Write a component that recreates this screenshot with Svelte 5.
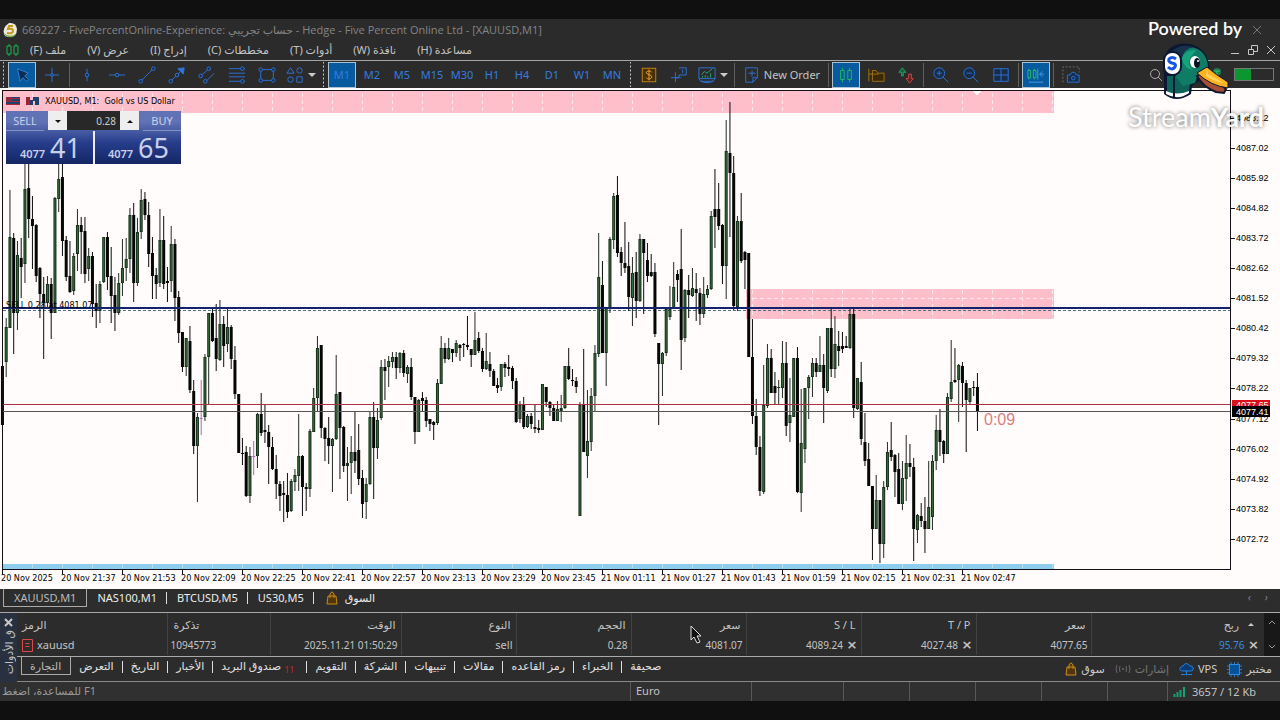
<script>
  // One candle per entry: direction (u up, d down, m flat), high, body top, body bottom, low.
  const series = `d366,366,425,425 u318,327,362,377 u190,237,328,328 d233,238,313,354 u241,255,313,330 d238,258,267,298 u164,189,264,283 d164,188,219,238
d196,219,226,269 d224,225,276,282 d267,268,294,318 d277,294,303,359 u276,284,303,307 d278,284,313,339 u197,198,313,313 u164,179,199,212
d164,177,241,256 d236,240,277,281 d241,276,292,293 u253,256,291,295 u209,225,254,271 d217,225,232,274 d217,231,274,283 u248,256,269,281
d252,256,304,317 d284,303,311,328 u281,284,311,323 u237,237,282,283 d232,237,277,290 d247,276,296,323 d277,295,313,331 u273,283,313,315
u239,268,283,296 u238,259,268,281 u208,215,259,273 d203,215,283,302 u218,232,283,286 u189,200,232,239 d192,199,215,220 d202,215,254,267
d237,253,276,299 d268,275,284,299 u209,240,283,287 d216,240,284,289 d267,281,283,302 u226,244,281,292 d239,244,298,321 d291,297,333,343
d332,332,367,372 u338,338,367,376 d326,341,390,393 d380,391,446,454 u413,417,446,502 m380,418,419,435 u354,357,417,421 u313,313,357,404
d307,313,341,342 d304,338,359,371 u300,324,360,361 d316,324,346,367 u307,327,344,352 d325,327,359,369 d346,360,394,399 d394,394,453,453
d438,453,454,465 d446,452,496,497 u447,456,496,503 m441,456,457,475 u413,414,456,468 d393,414,433,436 d404,430,432,443 d425,432,447,484
d437,447,469,470 d455,469,484,499 d481,484,496,511 d481,493,495,522 d473,495,512,518 u479,481,511,512 u469,475,482,491 u414,456,476,491
d455,456,487,516 d483,487,489,511 u429,431,489,497 u388,398,432,432 u336,348,398,411 d345,345,428,438 d427,428,439,461 d417,438,446,464
u438,439,446,492 u355,394,439,440 d392,392,428,479 d426,427,466,472 u447,463,466,501 u436,452,463,494 d412,452,461,473 d424,450,479,485
d470,478,504,518 u478,484,502,519 u412,417,484,485 d402,417,448,499 u408,420,448,459 u360,367,418,420 d359,367,371,400 u356,361,367,387
u352,357,362,368 d352,357,368,379 u352,353,368,373 d350,353,373,377 u365,367,374,383 d358,367,397,400 d397,397,432,444 u399,400,432,432
d392,398,401,411 d397,400,421,427 d419,419,424,431 d421,422,425,440 u379,383,423,425 u336,348,384,384 d343,348,359,363 u338,348,359,360
d349,349,353,362 u340,343,353,357 d344,345,348,361 d343,344,345,357 d316,345,347,350 d349,349,355,367 u312,340,355,355 d332,338,351,353
d348,351,369,372 u333,361,369,370 d352,364,371,377 d369,371,386,386 d378,385,388,393 u364,364,387,391 d362,364,368,377 d355,367,369,376
d366,368,381,389 d378,381,422,423 u401,405,419,423 d397,405,427,429 u414,416,427,428 d413,416,424,429 d405,427,429,433 d420,428,430,433
u384,384,430,430 d387,387,402,407 d401,402,408,416 d404,408,421,421 u401,409,421,421 u395,408,411,422 u366,366,408,409 d348,366,379,380
d369,380,381,386 d377,381,387,393 u402,405,516,516 d349,405,452,452 u390,441,456,478 u388,396,442,451 u345,353,396,411 u233,277,354,357
d261,285,353,353 u307,307,353,386 u237,239,308,313 u193,196,240,249 d176,195,253,257 d247,252,263,276 d222,263,268,273 d242,266,297,311
u257,273,298,326 d252,272,301,318 u234,239,301,302 d239,239,253,314 d243,260,276,282 d254,272,276,277 d263,272,334,337 d343,343,364,425
u352,353,364,396 u308,309,353,356 u286,309,317,320 u262,287,309,309 d270,274,280,302 d229,269,340,370 u289,290,338,342 d275,290,295,318
u268,288,296,297 d273,289,293,321 d288,293,314,325 u277,294,314,318 u285,289,295,298 u211,216,289,290 d169,209,217,248 d183,209,226,230
d224,225,266,284 u120,151,266,299 d102,153,173,237 d156,173,306,310 u216,221,307,311 d193,221,261,263 d251,252,260,289 d253,253,357,357
d319,357,416,424 d399,416,447,455 d436,447,491,496 u365,405,492,494 u344,358,406,408 d349,358,393,393 d372,386,393,404 u380,387,388,404
u341,363,388,398 d342,363,426,436 u378,415,423,442 u358,358,417,417 d347,358,492,493 u389,443,493,512 u388,388,449,463 u375,377,388,419
u358,363,377,397 d358,363,372,377 u336,365,372,372 d354,365,388,423 u328,328,391,393 d307,328,369,377 u316,344,369,378 d331,346,351,366
d332,346,349,353 d336,346,348,348 u308,314,348,349 d308,314,408,418 u378,378,409,410 d362,382,439,445 d413,442,461,466 d443,459,486,486
d486,486,529,560 u475,500,529,529 d500,500,544,563 u481,487,544,558 u442,452,487,490 d422,450,457,461 d454,455,472,497 d453,469,504,504
u461,478,504,510 u435,463,479,501 d444,463,467,477 d458,467,529,561 u514,515,530,543 d503,516,521,527 d497,521,529,553 u461,507,529,529
u455,461,517,530 u415,430,461,470 d409,430,442,456 d440,441,454,463 u393,397,454,454 u340,382,399,402 d348,380,382,383 u364,365,380,422
d362,366,383,407 d380,383,400,452 u388,388,402,405 d381,387,388,396 d373,387,411,431`;

  const candles = series.split(/\s+/).map((entry, i) => {
    const [high, top, bottom, low] = entry.slice(1).split(',').map(Number);
    return { dir: entry[0], x: 2.45 + i * 3.75, high, top, bottom, low };
  });

  const times = ['20 Nov 2025', '20 Nov 21:37', '20 Nov 21:53', '20 Nov 22:09', '20 Nov 22:25', '20 Nov 22:41', '20 Nov 22:57', '20 Nov 23:13', '20 Nov 23:29', '20 Nov 23:45', '21 Nov 01:11', '21 Nov 01:27', '21 Nov 01:43', '21 Nov 01:59', '21 Nov 02:15', '21 Nov 02:31', '21 Nov 02:47'];
  const prices = Array.from({ length: 15 }, (_, i) => (4088.12 - i * 1.1).toFixed(2));
  const grid = Array.from({ length: 35 }, (_, i) => 32 + i * 30);

  const menus = ['ملف (F)', 'عرض (V)', 'إدراج (I)', 'مخططات (C)', 'أدوات (T)', 'نافذة (W)', 'مساعدة (H)'];
  const frames = ['M1', 'M2', 'M5', 'M15', 'M30', 'H1', 'H4', 'D1', 'W1', 'MN'];
  const charts = ['XAUUSD,M1', 'NAS100,M1', 'BTCUSD,M5', 'US30,M5'];
  const panels = ['التجارة', 'التعرض', 'التاريخ', 'الأخبار', 'صندوق البريد', 'التقويم', 'الشركة', 'تنبيهات', 'مقالات', 'رمز القاعده', 'الخبراء', 'صحيفة'];
  let frame = 'M1';
  let chart = 'XAUUSD,M1';
  let panel = 'التجارة';
  let volume = '0.28';
</script>

{#snippet icon(name)}
  <svg class="ico" viewBox="0 0 20 20" width="20" height="20" aria-hidden="true">
    {#if name === 'cursor'}
      <path d="M5 3l3 14 3-4 4 4 2-2-4-4 4-3z" fill="#0c2c50" stroke="#3384e6" />
    {:else if name === 'cross'}
      <path d="M10 2v16M2 10h16" /><circle cx="10" cy="10" r="1.500" class="node" />
    {:else if name === 'vline'}
      <path d="M10 3v14" /><circle cx="10" cy="10" r="2" class="node" />
    {:else if name === 'hline'}
      <path d="M1 10h18" /><circle cx="10" cy="10" r="2" class="node" />
    {:else if name === 'trend'}
      <path d="M3 17L17 3" /><circle cx="3" cy="17" r="2" class="node" /><circle cx="17" cy="3" r="2" class="node" />
    {:else if name === 'ray'}
      <path d="M3 17L14 6" /><path d="M11 3l7-1-1 7z" fill="#2d76df" /><circle cx="3" cy="17" r="2" class="node" /><circle cx="10" cy="10" r="2" class="node" />
    {:else if name === 'channel'}
      <path d="M3 11l8-7M9 17l9-9" /><circle cx="3" cy="11" r="2" class="node" /><circle cx="12" cy="3" r="2" class="node" /><circle cx="8" cy="17" r="2" class="node" />
    {:else if name === 'fib'}
      <path d="M1 3h18M1 8h18M1 12h18M1 17h18" /><circle cx="16" cy="3" r="2" class="node" /><circle cx="16" cy="17" r="2" class="node" />
    {:else if name === 'rect'}
      <path d="M3 4h14v12H3z" /><circle cx="3" cy="4" r="2" class="node" /><circle cx="17" cy="4" r="2" class="node" /><circle cx="3" cy="16" r="2" class="node" /><circle cx="17" cy="16" r="2" class="node" />
    {:else if name === 'shapes'}
      <path d="M5 2l4 6H1z" /><circle cx="15" cy="5" r="3" /><circle cx="5" cy="15" r="3" /><path d="M12 12h6v6h-6z" />
    {:else if name === 'dollar'}
      <rect x="2.500" y="2.500" width="15" height="15" fill="#4a2f05" stroke="#c98a14" /><path d="M13 7c-1-2-6-2-6 .5S13 9 13 12s-5 3-6 1M10 4v12" stroke="#f0b030" />
    {:else if name === 'move'}
      <path d="M6 7v11M1 13h11M10 2h8v8h-8v2l-3 2M14 4v4" />
    {:else if name === 'indicator'}
      <path d="M1 2h18v12H1zM1 14c2 6 16 6 18 0M3 17h14" /><path d="M4 10l3-4 3 2 6-5M5 13v-2M8 13v-3M11 13v-2M14 13V8" stroke="#28a87b" />
    {:else if name === 'order'}
      <path d="M3 2h13v11l-5 5H3zM11 18v-5h5M10 5v7M6 8h8" />
    {:else if name === 'candles'}
      <path d="M4 5h4v10H4zM6 2v3M6 15v3M12 5h4v10h-4zM14 2v3M14 15v3" stroke="#20c05a" />
    {:else if name === 'folder'}
      <path d="M2 3v14M2 9h4M6 16V5h4l2 3h7v9H6zM6 9h7" stroke="#a8770e" fill="#3a2806" />
    {:else if name === 'updown'}
      <path d="M5 11V7H2l4-5 4 5H7v4z" stroke="#20a866" fill="#175e3c" /><path d="M13 9v5h-3l4 5 4-5h-2V9z" stroke="#d94848" fill="#5c2020" />
    {:else if name === 'zoomin' || name === 'zoomout'}
      <circle cx="8" cy="8" r="6" class="node" /><path d="M12 12l6 6M5 8h6" />
      {#if name === 'zoomin'}<path d="M8 5v6" />{/if}
    {:else if name === 'grid'}
      <path d="M2 3h16v14H2zM10 3v14M2 10h16" class="node" />
    {:else if name === 'shift'}
      <path d="M1 5h3v8H1zM7 5h3v8H7zM2 3v2M8 3v2M2 13v2M8 13v2" stroke="#28bf70" /><path d="M12 3v12M14 9h5M17 6l-3 3 3 3M2 18h16" stroke="#4e9cf0" />
    {:else if name === 'camera'}
      <path d="M1 18V1h18v6" stroke="#777" stroke-dasharray="2 2" /><path d="M6 10h3l2-3h3l2 3h3v8H6z" class="node" /><circle cx="12.500" cy="13.500" r="2" />
    {/if}
  </svg>
{/snippet}

{#snippet tool(name, label, on)}
  <button class="tool" class:on title={label} aria-label={label}>{@render icon(name)}</button>
{/snippet}

{#snippet bag()}
  <svg width="12" height="14" viewBox="0 0 12 14" aria-hidden="true"><path d="M2 5h8l1 8H1zM4 7V3q2-4 4 0v4" fill="#50360a" stroke="#c98c18" /></svg>
{/snippet}

<main class="app">
  <header class="title">
    <svg width="16" height="16" viewBox="0 0 16 16" aria-hidden="true"><path d="M2 12Q0 6 7 1q7-1 8 6 0 8-8 8-4 0-5-3z" fill="#eee9d9" /><path d="M2 11q5 5 12 1-2 4-8 3-3-1-4-4z" fill="#79b24a" /><path d="M11 4H7L6 7q5-1 5 2t-6 2" fill="none" stroke="#c19a19" stroke-width="2" /></svg>
    <span class="name">669227 - FivePercentOnline-Experience: <bdi>حساب تجريبي</bdi> - Hedge - Five Percent Online Ltd - [XAUUSD,M1]</span>
    <button class="bare dim" aria-label="Close"><svg width="10" height="10" viewBox="0 0 10 10"><path d="M1 1l8 8M9 1L1 9" /></svg></button>
  </header>

  <nav class="menu">
    <svg width="13" height="14" viewBox="0 0 13 14" aria-hidden="true"><path d="M1 3h4v8H1zM3 1v2M3 11v2M8 3h4v8H8zM10 1v2M10 11v2" fill="none" stroke="#19b34e" /></svg>
    {#each menus as item}<button class="bare" dir="rtl">{item}</button>{/each}
    <span class="wins">
      <button class="bare" aria-label="Minimise"><svg width="10" height="10" viewBox="0 0 10 10"><path d="M1 8.500h8" /></svg></button>
      <button class="bare" aria-label="Restore"><svg width="10" height="10" viewBox="0 0 10 10"><path d="M.5 4.500h5v5h-5zM3.500 4V.5h6v6H6" /></svg></button>
      <button class="bare" aria-label="Close chart"><svg width="10" height="10" viewBox="0 0 10 10"><path d="M1 1l8 8M9 1L1 9" /></svg></button>
    </span>
  </nav>

  <div class="toolbar">
    <i class="grip"></i>
    {@render tool('cursor', 'Cursor', true)}
    {@render tool('cross', 'Crosshair', false)}
    <i class="sep"></i>
    {@render tool('vline', 'Vertical line', false)}
    {@render tool('hline', 'Horizontal line', false)}
    {@render tool('trend', 'Trendline', false)}
    {@render tool('ray', 'Arrow line', false)}
    {@render tool('channel', 'Channel', false)}
    {@render tool('fib', 'Fibonacci', false)}
    {@render tool('rect', 'Rectangle', false)}
    <button class="tool drop" aria-label="Shapes">{@render icon('shapes')}<i class="caret"></i></button>
    <i class="grip"></i>
    {#each frames as f}
      <button class="tool" class:on={frame === f} on:click={() => (frame = f)}>{f}</button>
    {/each}
    <i class="grip"></i>
    {@render tool('dollar', 'Symbols', false)}
    {@render tool('move', 'Data window', false)}
    <button class="tool drop" aria-label="Indicators">{@render icon('indicator')}<i class="caret"></i></button>
    <i class="sep"></i>
    <button class="tool order">{@render icon('order')}New Order</button>
    <i class="sep"></i>
    {@render tool('candles', 'Candles', true)}
    {@render tool('folder', 'Templates', false)}
    {@render tool('updown', 'Trade levels', false)}
    <i class="sep"></i>
    {@render tool('zoomin', 'Zoom in', false)}
    {@render tool('zoomout', 'Zoom out', false)}
    {@render tool('grid', 'Tile windows', false)}
    <i class="sep"></i>
    {@render tool('shift', 'Chart shift', true)}
    <i class="sep"></i>
    {@render tool('camera', 'Screenshot', false)}
    <span class="right">
      <button class="tool grey" aria-label="Search"><svg width="14" height="14" viewBox="0 0 14 14"><circle cx="6" cy="6" r="4.500" /><path d="M9 9l4 4" /></svg></button>
      <svg width="12" height="16" viewBox="0 0 12 16" aria-hidden="true"><circle cx="6" cy="5" r="4" fill="#1c7a4c" /><path d="M3 4h6M6 4v9" stroke="#35c27e" /></svg>
      <span class="battery"><i></i></span>
    </span>
  </div>

  <section class="chart">
    <svg class="plot" viewBox="0 88 1280 501" role="img" aria-label="XAUUSD, M1">
      <g shape-rendering="crispEdges">
        <rect x="3" y="91" width="1051" height="22" fill="#ffbfca" />
        <rect x="746" y="289" width="308" height="30" fill="#ffbfca" />
        <rect x="3" y="564" width="1051" height="6" fill="#8fcdee" />
        {#each grid as x}
          <path d="M{x + 0.5} 93v20" class="mesh" />
          {#if x > 746}<path d="M{x + 0.5} 290v29" class="mesh" />{/if}
          <path d="M{x + 0.5} 564v5" class="mesh faint" />
        {/each}
        <path d="M746 298.500h308" class="mesh" />
        <path d="M972 91h10l-5 4z" fill="#fff" />
        <path d="M3 310.500h1228" stroke="#50718b" stroke-dasharray="3 2" />
      </g>
      {#each candles as c}
        <path d="M{c.x} {c.high}V{c.low}" stroke={c.dir === 'm' ? '#b565b5' : c.dir === 'u' ? '#222a22' : '#0c0c0c'} />
        <rect x={c.x - 1.5} y={c.top} width="3" height={Math.max(1, c.bottom - c.top)} class={c.dir} />
        {#if c.dir === 'u' && c.bottom - c.top > 4}<path d="M{c.x} {c.top + 1}V{c.bottom - 1}" stroke="#3a6a3c" />{/if}
      {/each}
      <g shape-rendering="crispEdges">
        <path d="M3 308h1228" stroke="#14236d" stroke-width="2" />
        <path d="M3 404.500h1228" stroke="#ae3340" />
        <path d="M3 411.500h1228" stroke="#555" />
        <path d="M2.500 569.500V90.500H1230.500V569.500z" fill="none" stroke="#161016" />
        {#each times as _, i}<path d="M{2.5 + i * 60} 570v4" stroke="#161016" />{/each}
        {#each prices as _, i}<path d="M1231 {118.5 + i * 30.05}h4" stroke="#161016" />{/each}
        <rect x="1232" y="400" width="38" height="10" fill="#d9101b" />
      </g>
      {#each times as t, i}<text x={1 + i * 60} y="581">{t}</text>{/each}
      {#each prices as p, i}<text class="price" x="1236" y={121 + i * 30.05}>{p}</text>{/each}
      <text class="price" x="1236" y="408" fill="#fff">4077.65</text>
      <rect x="1232" y="406" width="38" height="11" />
      <text class="price" x="1236" y="415" fill="#fff">4077.41</text>
      <text x="6" y="308">SELL 0.28 at 4081.07</text>
      <text class="timer" x="984" y="425">0:09</text>
    </svg>

    <div class="quote">
      <div class="caption">
        <svg width="34" height="10" viewBox="0 0 34 10" aria-hidden="true"><path d="M0 1h14v8H0z" fill="#23426b" /><path d="M0 2.500h14M0 5.500h14M0 8.500h14" stroke="#a8283b" /><path d="M0 1h6v5H0z" fill="#8b2d42" /><path d="M20 1h4v3h3V1h6v8h-4V5h-2v4h-7z" fill="#1e426e" /><path d="M20 1h4v8h-4z" fill="#9c2434" /></svg>
        <span>XAUUSD, M1:&nbsp; Gold vs US Dollar</span>
      </div>
      <div class="deal">
        <button class="side">SELL</button>
        <span class="lot">
          <button aria-label="Decrease volume"><i class="caret"></i></button>
          <input aria-label="Volume" bind:value={volume} />
          <button aria-label="Increase volume"><i class="caret up"></i></button>
        </span>
        <button class="side">BUY</button>
        <button class="big"><small>4077</small>41</button>
        <button class="big"><small>4077</small>65</button>
      </div>
    </div>
  </section>

  <nav class="charts">
    {#each charts as c}<button class:on={chart === c} on:click={() => (chart = c)}>{c}</button>{/each}
    <button class="market">{@render bag()}<span>السوق</span></button>
    <span class="steps"><i>‹</i><i>›</i></span>
  </nav>

  <section class="terminal">
    <div class="rail"><button class="bare" aria-label="Close toolbox"><svg width="9" height="9" viewBox="0 0 9 9"><path d="M1 1l7 7M8 1L1 8" stroke-width="2" /></svg></button><span>ق الأدوات</span></div>
    <div class="body">
      <div class="grid">
        <table>
          <colgroup><col class="c150" /><col class="c103" /><col class="c131" /><col class="c115" /><col class="c115" /><col class="c115" /><col class="c115" /><col class="c115" /><col class="c115" /><col /></colgroup>
          <thead>
            <tr><th>الرمز</th><th>تذكرة</th><th>الوقت</th><th>النوع</th><th>الحجم</th><th>سعر</th><th>S / L</th><th>T / P</th><th>سعر</th><th>ربح <i class="caret up"></i></th></tr>
          </thead>
          <tbody>
            <tr>
              <td><svg width="11" height="13" viewBox="0 0 11 13" aria-hidden="true"><path d="M.5.5h10v12H.5zM3.500 4.500h4M3.500 7.500h4" fill="none" stroke="#d94b4b" /></svg>xauusd</td>
              <td>10945773</td><td>2025.11.21 01:50:29</td><td>sell</td><td>0.28</td><td>4081.07</td>
              <td>4089.24 <button class="x" aria-label="Remove S / L">×</button></td>
              <td>4027.48 <button class="x" aria-label="Remove T / P">×</button></td>
              <td>4077.65</td>
              <td><span class="gain">95.76</span> <button class="x" aria-label="Close position">×</button></td>
            </tr>
          </tbody>
        </table>
        <div class="scroll"><svg width="8" height="5" viewBox="0 0 8 5"><path d="M1 4l3-3 3 3" /></svg><svg width="8" height="5" viewBox="0 0 8 5"><path d="M1 1l3 3 3-3" /></svg></div>
      </div>
      <nav class="panels">
        {#each panels as p}
          <button class:on={panel === p} on:click={() => (panel = p)}><bdi>{p}</bdi>{#if p === 'صندوق البريد'}<sub>11</sub>{/if}</button>
        {/each}
        <span class="links">
          <a href="#market">{@render bag()}<span>سوق</span></a>
          <a href="#signals" class="off"><svg width="16" height="10" viewBox="0 0 16 10" aria-hidden="true"><path d="M2 1q-2 4 0 8M5 2q-1 3 0 6M11 2q1 3 0 6M14 1q2 4 0 8" fill="none" stroke="#666" /><circle cx="8" cy="5" r="1" fill="#666" /></svg><span>إشارات</span></a>
          <a href="#vps"><svg width="15" height="14" viewBox="0 0 15 14" aria-hidden="true"><path d="M4 9Q0 9 1 6q1-2 3-2 3-5 7 0 4 0 3 4-1 1-3 1zM7.500 9v3M2 12.500h4M9 12.500h4" fill="#073b73" stroke="#2284dc" /><circle cx="7.500" cy="12.500" r="1" fill="#2284dc" /></svg><span>VPS</span></a>
          <a href="#tester"><svg width="15" height="15" viewBox="0 0 15 15" aria-hidden="true"><path d="M4 0v15M7.500 0v15M11 0v15M0 4h15M0 7.500h15M0 11h15" stroke="#2479c8" /><rect x="2.500" y="2.500" width="10" height="10" fill="#07539b" stroke="#2b8be4" /></svg><span>مختبر</span></a>
        </span>
      </nav>
    </div>
  </section>

  <footer class="status">
    <span class="help" dir="ltr"><bdi dir="rtl">للمساعدة، اضغط</bdi> F1</span>
    <span class="w121">Euro</span><span class="w92"></span><span class="w66"></span><span class="w66"></span><span class="w66"></span><span class="w66"></span><span class="w60"></span>
    <span class="net"><svg width="13" height="11" viewBox="0 0 13 11" aria-hidden="true"><path d="M1.500 11V8M4.500 11V6M7.500 11V4M11 11V1" stroke="#17a071" stroke-width="2" /></svg>3657 / 12 Kb</span>
  </footer>

  <svg class="pointer" width="12" height="19" viewBox="0 0 12 19" aria-hidden="true"><path d="M1 1v14l3-3 3 6 3-1-3-6h4z" fill="#111" stroke="#ddd" /></svg>

  <aside class="brand">
    <span class="powered">Powered by</span>
    <svg width="70" height="58" viewBox="0 0 70 58" aria-hidden="true">
      <path d="M3 33V51Q15 61 30 51L31 43 38 38 49 27Q47 8 35 3 20-3 8 6 3 12 2 20z" fill="#0b1733" />
      <path d="M6 33h20l3 8-1 7q-10 6-22 1z" fill="#0d6358" />
      <path d="M5 48q11 5 23 0v2q-11 8-23 1z" fill="#fff" />
      <path d="M17 8Q31 0 41 9q6 6 6 17l-11 8-2 6-12 3-7-9z" fill="#0f7d66" />
      <path d="M11 8Q20 0 32 4q-9 2-11 11l-4-4z" fill="#17304c" />
      <path d="M21 15q4-9 14-8l-6 8q-3 8 3 12-9-1-11-12z" fill="#18a37c" />
      <ellipse cx="34" cy="19" rx="5" ry="6" fill="#fff" /><ellipse cx="36" cy="20" rx="3" ry="5" fill="#071220" /><circle cx="37" cy="18" r="1" fill="#fff" />
      <path d="M36 33l9-5 20 18-2 4-8-1Q42 44 36 33z" fill="#a44e36" stroke="#10172c" stroke-width="2" />
      <path d="M36 30l10-6q9 8 21 15v6Q50 43 36 30z" fill="#ffb323" stroke="#10172c" />
      <path d="M46 26l1 5 16 9q-9-1-18-7z" fill="#ffd45a" />
      <rect x="3" y="9" width="17" height="23" rx="8" fill="#fff" stroke="#0b1733" stroke-width="2" />
      <path d="M13 32v22" stroke="#0b1733" stroke-width="2" />
      <path d="M15 16q-4-3-7 0-1 3 3 4 5 1 3 4-3 4-7 0" fill="none" stroke="#1554e5" stroke-width="3" />
    </svg>
    <span class="wordmark">Stream<b>Yard</b></span>
  </aside>
</main>

<style>
  :global(body) { margin: 0; background: #101010; }
  .app { position: relative; padding: 19px 0; font: 11px/16px "Noto Sans", "DejaVu Sans", sans-serif; color: #c4c4c4; background: #101010; overflow: hidden; }
  button { font: inherit; color: inherit; background: none; border: 0; padding: 0; margin: 0; white-space: nowrap; }
  svg { display: block; flex: none; }
  .bare svg { fill: none; stroke: #c8c8c8; }
  .title { display: flex; align-items: center; gap: 4px; height: 22px; padding: 0 18px 0 2px; background: #2b2b2b; color: #858585; }
  .title .name { flex: 1; font-family: "Open Sans", "DejaVu Sans", sans-serif; }
  .dim svg { stroke: #777; }
  .menu { display: flex; align-items: center; gap: 21px; height: 17px; padding: 0 4px 2px 6px; background: #2b2b2b; border-bottom: 1px solid #a5a5a5; }
  .menu > svg { margin-right: -10px; }
  .wins { display: flex; gap: 8px; margin-left: auto; }
  .toolbar { display: flex; align-items: center; height: 27px; background: #2b2b2b; }
  .grip { flex: none; width: 7px; height: 25px; background: radial-gradient(circle, #ccc 1px, transparent 1px) center / 7px 4px repeat-y; }
  .sep { flex: none; width: 1px; height: 24px; margin: 0 2px; background: #606060; }
  .tool { display: flex; flex: none; align-items: center; justify-content: center; width: 28px; height: 26px; margin: 0 1px; border: 1px solid transparent; color: #337de0; box-sizing: border-box; }
  .tool.on { background: #075a9d; border-color: #a9c3d5; }
  .tool.drop { width: 36px; gap: 4px; }
  .tool.order { width: 87px; gap: 3px; color: #c4c4c4; }
  .ico { width: 18px; height: 18px; fill: none; stroke: #2d76df; }
  .node { fill: #182d49; }
  .caret { display: inline-block; border: 4px solid transparent; border-top-color: #ccc; border-bottom: 0; }
  .caret.up { transform: rotate(180deg); }
  .right { display: flex; align-items: center; gap: 11px; margin-left: auto; padding-right: 6px; }
  .grey svg { fill: none; stroke: #aaa; }
  .right .grey { margin-right: 30px; }
  .battery { width: 38px; height: 11px; border: 1px solid #777; }
  .battery i { display: block; width: 16px; height: 100%; background: #0c9631; }
  .chart { position: relative; background: #fffcfb; }
  .plot { width: 100%; height: auto; }
  .plot text { font: 9px "DejaVu Sans Condensed", "DejaVu Sans", sans-serif; }
  .plot .price { font: 9px "Liberation Sans", sans-serif; }
  .plot .timer { font: 16px "Liberation Sans", sans-serif; fill: #dc7d82; }
  .mesh { stroke: #ffe6e8; stroke-dasharray: 4 3; }
  .mesh.faint { stroke: #b5e0f3; }
  .u { fill: #15301a; }
  .d { fill: #050705; }
  .m { fill: #b565b5; }
  .quote { position: absolute; left: 6px; top: 6px; }
  .caption { display: flex; align-items: center; gap: 5px; height: 14px; font: 9px/14px "DejaVu Sans Condensed", "DejaVu Sans", sans-serif; color: #000; white-space: nowrap; }
  .deal { position: relative; display: grid; grid-template-columns: 87px 86px; grid-template-rows: 20px 33px; column-gap: 2px; margin-top: 3px; width: 175px; background: linear-gradient(#6173b5 0 20%, #263d8c 60%, #142664); color: #c9d0ea; }
  .deal .side { width: 38px; border-bottom: 1px solid #8391c5; }
  .deal .side:nth-of-type(2) { justify-self: end; }
  .lot { position: absolute; left: 42px; top: 0; display: flex; width: 91px; height: 19px; background: #eee; }
  .lot button { width: 19px; }
  .lot .caret { border-width: 3px; border-bottom: 0; border-top-color: #111; vertical-align: middle; }
  .lot input { flex: 1; min-width: 0; padding: 0 4px; border: 0; background: #282828; color: #ccc; font: 10px "Noto Sans", sans-serif; text-align: right; }
  .deal .big { text-align: right; padding-right: 12px; font: 27px/33px "Noto Sans", sans-serif; }
  .deal .big + .big { border-left: 2px solid #eef; margin-left: -2px; }
  .big small { margin-right: 5px; font-size: 11px; font-weight: 600; }
  .charts { display: flex; align-items: flex-start; height: 23px; padding-left: 3px; background: #2d2d2d; border-bottom: 1px solid #a9a9a9; color: #eee; }
  .charts button { height: 18px; padding: 0 10px; background: linear-gradient(#ddd, #ddd) right / 1px 12px no-repeat; line-height: 18px; }
  .charts .on { background: none; border: 1px solid #aaa; border-top: 0; color: #bbb; line-height: 17px; }
  .charts .market { display: flex; align-items: center; gap: 7px; padding-left: 12px; background: none; }
  .steps { display: flex; gap: 14px; margin-left: auto; padding-right: 12px; color: #888; }
  .terminal { display: flex; background: #2c2c2c; }
  .rail { display: flex; flex-direction: column; align-items: center; width: 17px; height: 69px; padding-top: 5px; gap: 3px; box-sizing: border-box; background: #293040; }
  .rail span { writing-mode: vertical-rl; transform: rotate(180deg); font-size: 11px; white-space: nowrap; }
  .body { flex: 1; min-width: 0; }
  .grid { display: flex; align-items: flex-start; height: 43px; border-bottom: 1px solid #aaa; }
  table { flex: 1; min-width: 0; border-collapse: collapse; table-layout: fixed; }
  th, td { height: 20px; padding: 0 3px; border-right: 1px solid #424242; font-weight: 400; text-align: right; white-space: nowrap; }
  th { height: 21px; padding-right: 5px; padding-top: 1px; }
  td { font-size: 10px; }
  td:first-child, td:nth-child(4) { font-size: 11px; }
  th:last-child, td:last-child { border: 0; padding-right: 5px; }
  th:last-child { padding-right: 10px; }
  th:nth-child(-n + 2), td:nth-child(-n + 2) { text-align: left; }
  th:first-child, td:first-child { padding-left: 5px; }
  th:nth-child(2) { padding-left: 6px; }
  td:first-child svg { display: inline-block; margin-right: 4px; vertical-align: -3px; }
  th .caret { border-width: 3px; border-bottom: 0; margin-left: 6px; vertical-align: 3px; }
  .c150 { width: 150px; } .c103 { width: 103px; } .c131 { width: 131px; } .c115 { width: 115px; }
  .x { margin-left: 1px; font: bold 13px/14px "DejaVu Sans", sans-serif; }
  .gain { color: #348ce3; }
  .scroll { display: flex; align-self: stretch; flex-direction: column; justify-content: space-between; align-items: center; width: 16px; padding: 7px 0; box-sizing: border-box; background: #181818; }
  .scroll svg { fill: none; stroke: #999; }
  .panels { display: flex; align-items: flex-start; height: 24px; padding-left: 4px; border-bottom: 1px solid #888; color: #e3e3e3; }
  .panels button { height: 18px; padding: 0 9px 0 8px; background: linear-gradient(#ddd, #ddd) right 4px / 1px 12px no-repeat; line-height: 18px; }
  .panels .on { border: 1px solid #aaa; border-top: 0; background: none; color: #bbb; }
  .panels button:nth-of-type(12) { background: none; }
  .panels sub { margin: 0 4px 0 3px; color: #c2262d; font-size: 9px; line-height: 1px; }
  .links { display: flex; gap: 10px; margin-left: auto; padding: 4px 8px 0 0; }
  .links a { display: flex; align-items: center; gap: 4px; color: #ccc; text-decoration: none; }
  .links .off { color: #777; }
  .status { display: flex; height: 19px; background: #303030; line-height: 18px; }
  .status span { box-sizing: border-box; padding-left: 5px; border-left: 1px solid #585858; }
  .status .help { flex: 1; padding-left: 2px; border: 0; color: #999; }
  .w121 { width: 121px; } .w92 { width: 92px; } .w66 { width: 66px; } .w60 { width: 60px; }
  .status .net { display: flex; align-items: center; gap: 6px; width: 113px; }
  .pointer { position: absolute; left: 690px; top: 625px; }
  .brand { position: absolute; right: 12px; top: 17px; display: flex; flex-direction: column; align-items: center; color: #fff; width: 144px; pointer-events: none; }
  .powered { font: 600 18px/22px Lato, sans-serif; align-self: flex-start; margin-left: 24px; }
  .brand svg { margin: 4px 0 2px; }
  .wordmark { font: 27px/28px Lato, sans-serif; text-shadow: 0 0 4px #0009; }
  .wordmark b { font-weight: 700; }
</style>
